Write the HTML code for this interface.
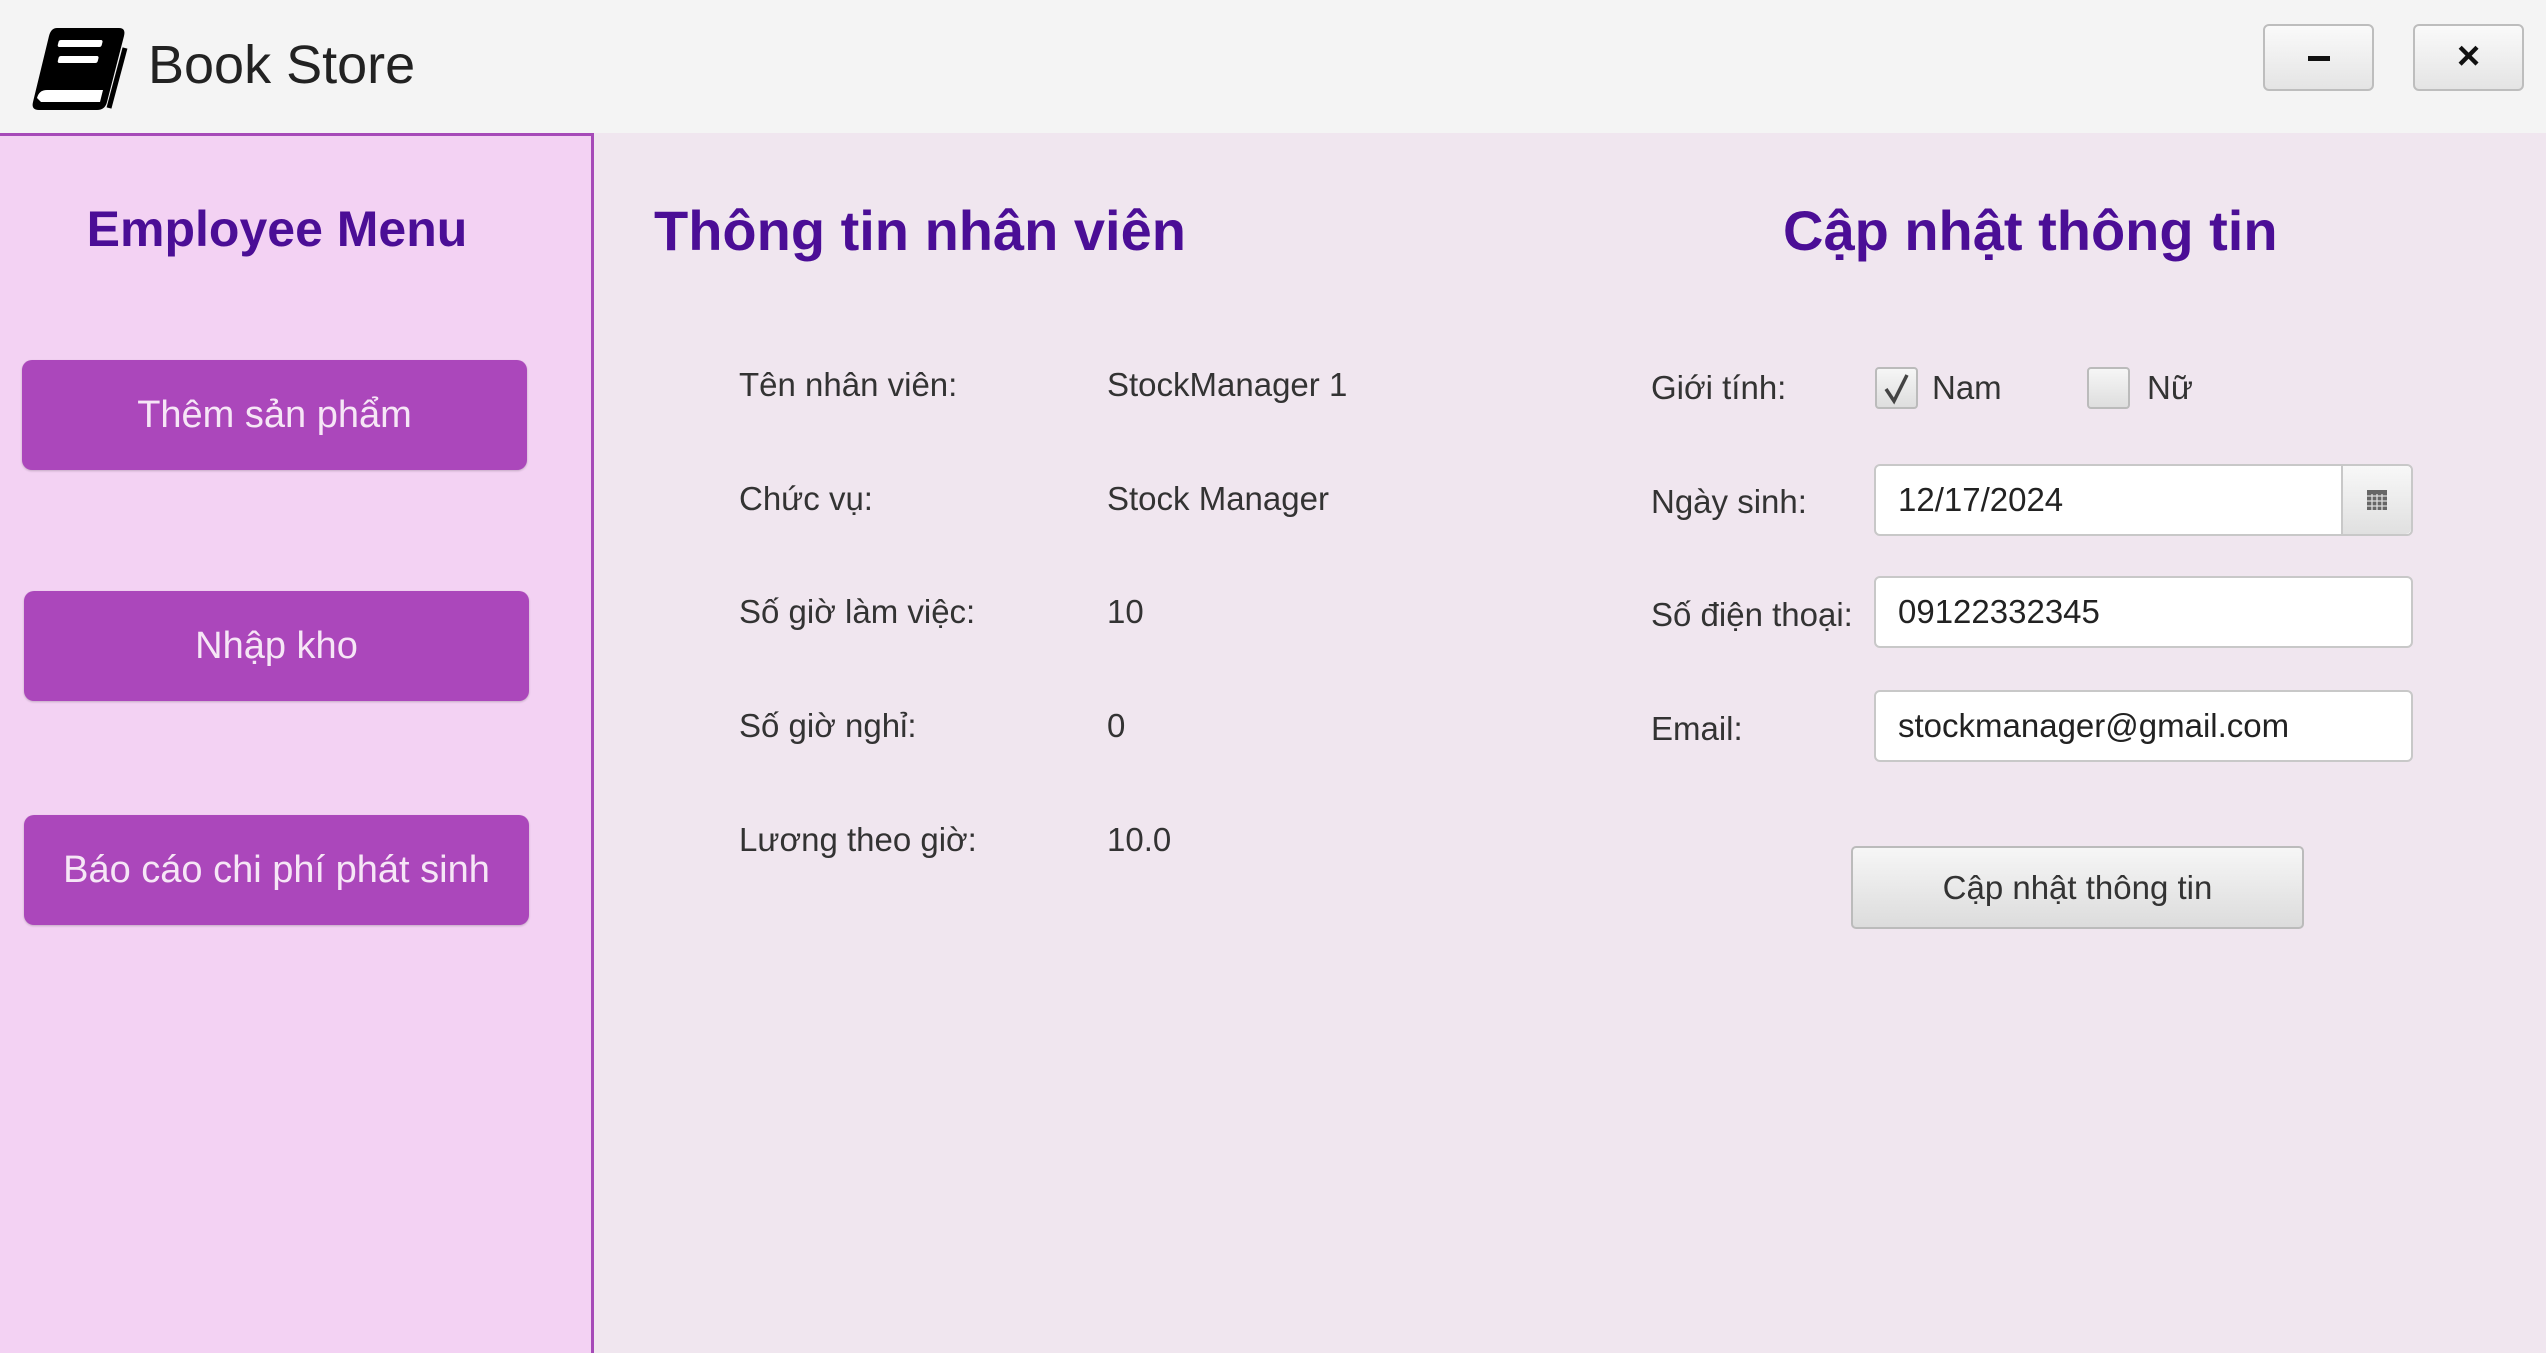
<!DOCTYPE html>
<html><head><meta charset="utf-8"><style>
*{margin:0;padding:0;box-sizing:border-box}
body{width:2546px;height:1353px;overflow:hidden;background:#f0e6ef;font-family:"Liberation Sans","DejaVu Sans",sans-serif;position:relative;color:#333}
.abs{position:absolute}
#top{left:0;top:0;width:2546px;height:133px;background:#f4f4f4}
#side{left:0;top:133px;width:594px;height:1220px;background:#f3d2f3;border-top:3px solid #a64ab8;border-right:3px solid #a64ab8}
.wbtn{top:24px;width:111px;height:67px;border:2px solid #bdbdbd;border-radius:6px;background:linear-gradient(#fafafa,#e4e4e4)}
.mbtn{width:505px;height:110px;background:#ab47bb;border-radius:10px;color:#f6e6f6;font-size:38px;display:flex;align-items:center;justify-content:center;box-shadow:0 1px 2px rgba(0,0,0,.2)}
h1{position:absolute;font-size:56px;font-weight:bold;color:#4b0e96;white-space:nowrap}
.t{position:absolute;font-size:33px;color:#333;white-space:nowrap;transform:translateY(-50%)}
.fld{position:absolute;left:1874px;width:539px;height:72px;background:#fff;border:2px solid #c8c8c8;border-radius:6px;font-size:33px;padding-left:22px;display:flex;align-items:center;color:#222}
.cb{position:absolute;width:43px;height:42px;border:2px solid #bbb;border-radius:4px;background:linear-gradient(#f6f6f6,#dedede)}
</style></head><body>
<div id="top" class="abs"></div>
<svg class="abs" style="left:29px;top:24px" width="100" height="92" viewBox="0 0 100 92">
<path d="M28 4 H90 Q97 4 95 12 L78 78 Q76 86 68 86 H10 Q2 86 4 78 L20 12 Q22 4 28 4Z" fill="#000"/>
<path d="M8 74 Q10 66 18 66 H74 L71 78 H12Z" fill="#fff"/>
<rect x="34" y="16" width="44" height="7" rx="2" fill="#fff" transform="skewX(-14)"/>
<rect x="38" y="32" width="40" height="7" rx="2" fill="#fff" transform="skewX(-14)"/>
<path d="M96 24 L80 84" stroke="#000" stroke-width="5"/>
</svg>
<div class="abs" style="left:148px;top:34px;font-size:54px;color:#222">Book Store</div>
<div class="abs wbtn" style="left:2263px"><div class="abs" style="left:43px;top:30px;width:22px;height:5px;background:#111"></div></div>
<div class="abs wbtn" style="left:2413px"><div class="abs" style="left:0;top:8px;width:107px;text-align:center;font-size:40px;font-weight:bold;color:#111">×</div></div>
<div id="side" class="abs"></div>
<div class="abs" style="left:0;top:200px;width:554px;text-align:center;font-size:50px;font-weight:bold;color:#4b0e96">Employee Menu</div>
<div class="abs mbtn" style="left:22px;top:360px">Thêm sản phẩm</div>
<div class="abs mbtn" style="left:24px;top:591px">Nhập kho</div>
<div class="abs mbtn" style="left:24px;top:815px">Báo cáo chi phí phát sinh</div>
<h1 style="left:654px;top:198px">Thông tin nhân viên</h1>
<h1 style="left:1783px;top:198px">Cập nhật thông tin</h1>
<div class="t" style="left:739px;top:385px">Tên nhân viên:</div><div class="t" style="left:1107px;top:385px">StockManager 1</div>
<div class="t" style="left:739px;top:499px">Chức vụ:</div><div class="t" style="left:1107px;top:499px">Stock Manager</div>
<div class="t" style="left:739px;top:612px">Số giờ làm việc:</div><div class="t" style="left:1107px;top:612px">10</div>
<div class="t" style="left:739px;top:726px">Số giờ nghỉ:</div><div class="t" style="left:1107px;top:726px">0</div>
<div class="t" style="left:739px;top:840px">Lương theo giờ:</div><div class="t" style="left:1107px;top:840px">10.0</div>
<div class="t" style="left:1651px;top:388px">Giới tính:</div>
<div class="cb" style="left:1875px;top:367px"><svg width="40" height="40" style="position:absolute;left:0;top:0"><path d="M9 20 L17 32 L30 6" fill="none" stroke="#444" stroke-width="3.5"/></svg></div>
<div class="t" style="left:1932px;top:388px">Nam</div>
<div class="cb" style="left:2087px;top:367px"></div>
<div class="t" style="left:2147px;top:388px">Nữ</div>
<div class="t" style="left:1651px;top:502px">Ngày sinh:</div>
<div class="fld" style="top:464px">12/17/2024
<div class="abs" style="right:0;top:0;width:70px;height:68px;border-left:2px solid #c8c8c8;background:linear-gradient(#f8f8f8,#e0e0e0);border-radius:0 5px 5px 0">
<svg width="24" height="24" style="position:absolute;left:22px;top:22px"><rect x="2" y="2" width="20" height="20" fill="#666"/><path d="M2 8H22M2 13H22M2 18H22M7 6V22M12 6V22M17 6V22" stroke="#ddd" stroke-width="1.3"/></svg></div></div>
<div class="t" style="left:1651px;top:615px">Số điện thoại:</div>
<div class="fld" style="top:576px">09122332345</div>
<div class="t" style="left:1651px;top:729px">Email:</div>
<div class="fld" style="top:690px">stockmanager@gmail.com</div>
<div class="abs" style="left:1851px;top:846px;width:453px;height:83px;border:2px solid #bbb;border-radius:5px;background:linear-gradient(#f6f6f6,#dcdcdc);font-size:33px;color:#333;display:flex;align-items:center;justify-content:center">Cập nhật thông tin</div>
</body></html>
